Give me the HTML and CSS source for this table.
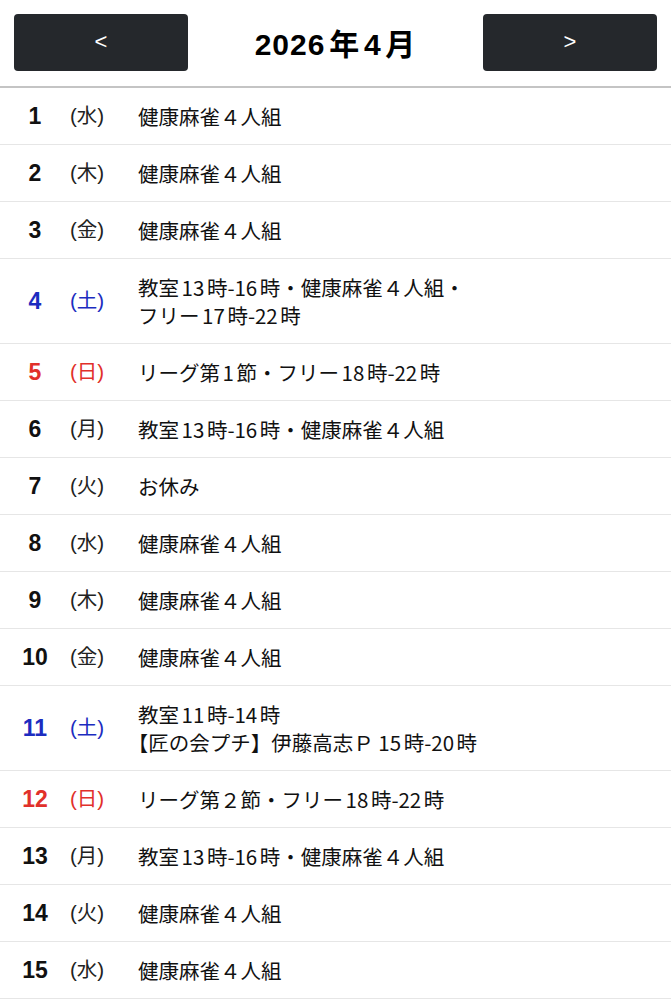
FILE: index.html
```html
<!DOCTYPE html>
<html lang="ja">
<head>
<meta charset="utf-8">
<title>2026年4月</title>
<link rel="stylesheet" href="styles.css">
</head>
<body>
<header class="bar">
  <button class="nav">&lt;</button>
  <h1 class="title">2026年4月</h1>
  <button class="nav">&gt;</button>
</header>
<ul class="days">
  <li class="day"><span class="num">1</span><span class="wd">(水)</span><span class="ev">健康麻雀４人組</span></li>
  <li class="day"><span class="num">2</span><span class="wd">(木)</span><span class="ev">健康麻雀４人組</span></li>
  <li class="day"><span class="num">3</span><span class="wd">(金)</span><span class="ev">健康麻雀４人組</span></li>
  <li class="day sat"><span class="num">4</span><span class="wd">(土)</span><span class="ev">教室13時-16時・健康麻雀４人組・<br>フリー17時-22時</span></li>
  <li class="day sun"><span class="num">5</span><span class="wd">(日)</span><span class="ev">リーグ第1節・フリー18時-22時</span></li>
  <li class="day"><span class="num">6</span><span class="wd">(月)</span><span class="ev">教室13時-16時・健康麻雀４人組</span></li>
  <li class="day"><span class="num">7</span><span class="wd">(火)</span><span class="ev">お休み</span></li>
  <li class="day"><span class="num">8</span><span class="wd">(水)</span><span class="ev">健康麻雀４人組</span></li>
  <li class="day"><span class="num">9</span><span class="wd">(木)</span><span class="ev">健康麻雀４人組</span></li>
  <li class="day"><span class="num">10</span><span class="wd">(金)</span><span class="ev">健康麻雀４人組</span></li>
  <li class="day sat"><span class="num">11</span><span class="wd">(土)</span><span class="ev">教室11時-14時<br>【匠の会プチ】伊藤高志Ｐ 15時-20時</span></li>
  <li class="day sun"><span class="num">12</span><span class="wd">(日)</span><span class="ev">リーグ第２節・フリー18時-22時</span></li>
  <li class="day"><span class="num">13</span><span class="wd">(月)</span><span class="ev">教室13時-16時・健康麻雀４人組</span></li>
  <li class="day"><span class="num">14</span><span class="wd">(火)</span><span class="ev">健康麻雀４人組</span></li>
  <li class="day"><span class="num">15</span><span class="wd">(水)</span><span class="ev">健康麻雀４人組</span></li>
</ul>
</body>
</html>
```
FILE: styles.css
```css
* { box-sizing: border-box; }
body {
  margin: 0;
  background: #fff;
  color: #111;
  font-family: "Liberation Sans", "Noto Sans CJK JP", sans-serif;
}
.bar {
  display: flex;
  align-items: center;
  justify-content: space-between;
  padding: 14px;
  border-bottom: 2px solid #c4c4c4;
  height: 88px;
}
.nav {
  width: 174px;
  height: 57px;
  margin-bottom: 2px;
  border: none;
  border-radius: 4px;
  background: #25282c;
  color: #fff;
  font-family: "Liberation Sans", sans-serif;
  font-size: 22px;
  padding: 0;
}
.title {
  margin: 0 0 2px;
  font-size: 30px;
  font-weight: bold;
  color: #000;
  letter-spacing: 1px;
  text-autospace: normal;
  font-family: "Liberation Sans", "Noto Sans CJK JP", sans-serif;
}
.days {
  list-style: none;
  margin: 0;
  padding: 0;
}
.day {
  display: grid;
  grid-template-columns: 70px 68px 1fr;
  align-items: center;
  padding: 14px 0;
  border-bottom: 1px solid #e6e6e6;
  font-size: 20.5px;
  line-height: 28px;
}
.num {
  text-align: center;
  font-weight: bold;
  font-size: 23px;
  color: #111;
}
.wd {
  color: #222;
}
.ev {
  color: #111;
  font-family: "Noto Sans CJK JP", sans-serif;
  font-size: 20.5px;
  text-autospace: normal;
  text-spacing-trim: trim-start;
}
.sat .num, .sat .wd { color: #1c2cc0; }
.sun .num, .sun .wd { color: #e1302a; }
```
